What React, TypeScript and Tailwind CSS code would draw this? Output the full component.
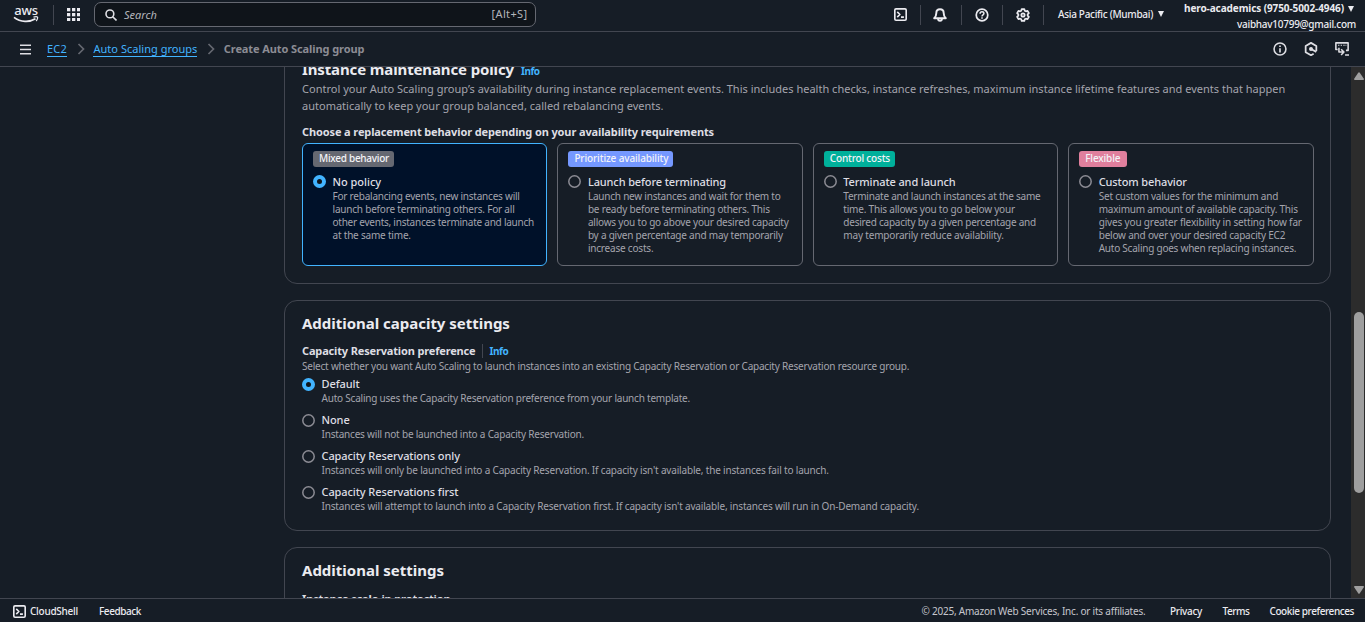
import React from 'react';
import type { ReactNode } from 'react';

const icon = { viewBox: '0 0 16 16', fill: 'none', stroke: 'currentColor', strokeWidth: 2.2, strokeLinejoin: 'round' as const };

function ShellIcon() {
  return (
    <svg {...icon} strokeWidth={2} className="size-[13px] shrink-0">
      <rect x="1" y="1" width="14" height="14" rx="1.5" />
      <path d="M4 4.8 7.2 8 4 11.2M8.6 11.2h3.6" />
    </svg>
  );
}

function BellIcon() {
  return (
    <svg {...icon} className="-ml-px mr-px size-[14px]">
      <path d="M8 1.400c-2.700 0-4.200 1.900-4.200 4.200 0 3.400-.9 4.500-2.400 6.100h13.200c-1.500-1.600-2.400-2.700-2.400-6.100C12.200 3.300 10.700 1.400 8 1.400Z" />
      <path d="M5.800 12.200c0 1.400.9 2.400 2.200 2.400s2.200-1 2.200-2.400" />
    </svg>
  );
}

function HelpIcon() {
  return (
    <svg {...icon} strokeWidth={2} className="size-[14px]">
      <circle cx="8" cy="8" r="6.600" />
      <path d="M5.800 6.500c0-1.300.9-2.200 2.200-2.200s2.200.8 2.200 2c0 1.600-2.200 1.500-2.200 3.400M8 10.700v1.600" strokeWidth={1.700} />
    </svg>
  );
}

function GearIcon() {
  return (
    <svg {...icon} strokeWidth={2} className="size-[14px]">
      <path d="M6.500 1.200h3l.5 1.900 1.300.7 1.900-.5 1.500 2.600-1.400 1.400v1.400l1.400 1.400-1.500 2.600-1.900-.5-1.300.7-.5 1.900h-3L6 12.900l-1.300-.7-1.900.5-1.500-2.600 1.400-1.400V7.300L1.300 5.900l1.500-2.600 1.900.5L6 3.100Z" />
      <circle cx="8" cy="8" r="1.900" />
    </svg>
  );
}

function InfoIcon() {
  return (
    <svg {...icon} strokeWidth={1.800} className="size-[14px]">
      <circle cx="8" cy="8" r="6.800" />
      <path d="M8 4.100v1.700M8 7v5" strokeWidth={1.900} />
    </svg>
  );
}

function HexIcon() {
  return (
    <svg {...icon} strokeWidth={2} className="size-[14px]">
      <path d="M11 13.500 8 15.100 1.900 11.600V4.500L8 1l6.100 3.500v5.800" />
      <path d="M14.100 11.200 8.500 8.300" strokeWidth={2.200} />
      <circle cx="8" cy="8" r="1.300" fill="currentColor" />
    </svg>
  );
}

function ScreenIcon() {
  return (
    <svg {...icon} strokeWidth={1.800} className="size-[14px]">
      <path d="M3 8.600H1V1h14v8.600h-2.500" />
      <path d="M3.500 3.700h1.500M6.500 3.700H8M9.500 3.700H11M12 3.700h1" strokeWidth={1.300} />
      <path d="M4.500 6.500v5h5M7 8.200l3.200 3.300L7 14.800M11.500 14.800H16" />
    </svg>
  );
}

function AwsLogo() {
  return (
    <div className="flex w-[26px] flex-col items-center pb-[2px] text-[#ebebf0]">
      <span className="h-[11px] text-[13px] leading-[10px] font-medium tracking-[-0.2px]">aws</span>
      <svg viewBox="0 0 26 7" className="h-[7px] w-[26px]" fill="none" stroke="currentColor">
        <path d="M1 1.300c6.500 5 15.500 5.200 21.500 1.500" strokeWidth="1.700" />
        <path d="M20.500 1.200c2-.6 3.600-.5 4 0 .3.600-.2 2.300-1.300 3.800" strokeWidth="1.300" />
      </svg>
    </div>
  );
}

function Radio({ checked = false, className = '' }: { checked?: boolean; className?: string }) {
  return checked ? (
    <span className={`size-[13px] shrink-0 rounded-full border-4 border-[#42b4ff] bg-[#0f141a] ${className}`} />
  ) : (
    <svg viewBox="0 0 13 13" className={`size-[13px] shrink-0 ${className}`} fill="none" stroke="#8c8c94" strokeWidth="1.500">
      <circle cx="6.500" cy="6.500" r="5.700" />
    </svg>
  );
}

type Line = [text: string, tracking: string];

const behaviors: {
  badge: string;
  badgeClass: string;
  title: string;
  titleClass: string;
  lines: Line[];
  selected?: boolean;
}[] = [
  {
    badge: 'Mixed behavior',
    badgeClass: 'w-[81px] bg-[#656871] tracking-[-0.28px]',
    title: 'No policy',
    titleClass: 'tracking-[-0.03px]',
    selected: true,
    lines: [
      ['For rebalancing events, new instances will', 'tracking-[-0.22px]'],
      ['launch before terminating others. For all', 'tracking-[-0.2px]'],
      ['other events, instances terminate and launch', 'tracking-[-0.24px]'],
      ['at the same time.', 'tracking-[-0.2px]'],
    ],
  },
  {
    badge: 'Prioritize availability',
    badgeClass: 'w-[105px] bg-[#7598ff] tracking-[-0.13px]',
    title: 'Launch before terminating',
    titleClass: 'tracking-[-0.12px]',
    lines: [
      ['Launch new instances and wait for them to', 'tracking-[-0.22px]'],
      ['be ready before terminating others. This', 'tracking-[-0.2px]'],
      ['allows you to go above your desired capacity', 'tracking-[-0.2px]'],
      ['by a given percentage and may temporarily', 'tracking-[-0.22px]'],
      ['increase costs.', 'tracking-[-0.2px]'],
    ],
  },
  {
    badge: 'Control costs',
    badgeClass: 'w-[71px] bg-[#00b09b] tracking-[-0.18px]',
    title: 'Terminate and launch',
    titleClass: 'tracking-[-0.12px]',
    lines: [
      ['Terminate and launch instances at the same', 'tracking-[-0.23px]'],
      ['time. This allows you to go below your', 'tracking-[-0.2px]'],
      ['desired capacity by a given percentage and', 'tracking-[-0.23px]'],
      ['may temporarily reduce availability.', 'tracking-[-0.18px]'],
    ],
  },
  {
    badge: 'Flexible',
    badgeClass: 'w-[48px] bg-[#e07f9d] tracking-[-0.15px]',
    title: 'Custom behavior',
    titleClass: 'tracking-[-0.12px]',
    lines: [
      ['Set custom values for the minimum and', 'tracking-[-0.22px]'],
      ['maximum amount of available capacity. This', 'tracking-[-0.22px]'],
      ['gives you greater flexibility in setting how far', 'tracking-[-0.16px]'],
      ['below and over your desired capacity EC2', 'tracking-[-0.2px]'],
      ['Auto Scaling goes when replacing instances.', 'tracking-[-0.235px]'],
    ],
  },
];

const reservations = [
  { title: 'Default', text: 'Auto Scaling uses the Capacity Reservation preference from your launch template.', tracking: 'tracking-[-0.211px]', checked: true },
  { title: 'None', text: 'Instances will not be launched into a Capacity Reservation.', tracking: 'tracking-[-0.2px]' },
  { title: 'Capacity Reservations only', text: "Instances will only be launched into a Capacity Reservation. If capacity isn't available, the instances fail to launch.", tracking: 'tracking-[-0.175px]' },
  { title: 'Capacity Reservations first', text: "Instances will attempt to launch into a Capacity Reservation first. If capacity isn't available, instances will run in On-Demand capacity.", tracking: 'tracking-[-0.17px]' },
];

function Panel({ className, children }: { className: string; children: ReactNode }) {
  return <section className={`shrink-0 rounded-[13px] border border-[#424650] pr-[16.4px] pl-[17px] ${className}`}>{children}</section>;
}

function Divider() {
  return <span className="h-5 w-px bg-[#424650]" />;
}

function Chevron() {
  return (
    <svg viewBox="0 0 8 12" className="h-3 w-2" fill="none" stroke="#656871" strokeWidth="1.700">
      <path d="m1.500 1 5 5-5 5" />
    </svg>
  );
}

function Caret({ className = '' }: { className?: string }) {
  return (
    <svg viewBox="0 0 6 6" className={`size-[6px] ${className}`} fill="currentColor">
      <path d="M0 0h6L3 6Z" />
    </svg>
  );
}

export default function App() {
  return (
    <div className="flex h-[622px] w-[1365px] flex-col overflow-hidden bg-[#161d26] font-['Noto_Sans',sans-serif] whitespace-nowrap text-[#dedee3]">
      <header className="flex h-8 shrink-0 items-start border-b border-[#424650]">
        <div className="flex h-[29px] items-center pl-[13px]">
          <AwsLogo />
          <span className="ml-[14px] h-5 w-px bg-[#424650]" />
          <svg viewBox="0 0 13 13" className="ml-[13px] size-[13px]" fill="#ebebf0">
            {[0, 5, 10].flatMap((y) => [0, 5, 10].map((x) => <rect key={`${x}-${y}`} x={x} y={y} width="3.300" height="3.300" />))}
          </svg>
          <div className="ml-[14px] flex h-[25px] w-[442px] items-center rounded-[7px] border border-[#656871] bg-[#0f141a] pt-px pr-[7.5px] pl-[10px] text-[11px]">
            <svg viewBox="0 0 12 12" className="mb-px size-3" fill="none" stroke="#dedee3" strokeWidth="1.600">
              <circle cx="4.900" cy="4.900" r="3.900" />
              <path d="m7.700 7.700 3.800 3.800" />
            </svg>
            <span className="ml-[7px] text-[#b4b4bb] italic">Search</span>
            <span className="mb-px ml-auto tracking-[0.37px] text-[#b4b4bb]">[Alt+S]</span>
          </div>
        </div>
        <div className="ml-auto flex h-[29px] items-center gap-[13px] text-[#ebebf0]">
          <ShellIcon />
          <Divider />
          <BellIcon />
          <Divider />
          <HelpIcon />
          <Divider />
          <GearIcon />
          <Divider />
        </div>
        <div className="ml-[14px] flex h-[28px] items-center gap-[5px] text-[10px] font-medium text-[#ebebf0]">
          <span className="tracking-[-0.305px]">Asia Pacific (Mumbai)</span>
          <Caret />
        </div>
        <div className="mr-[9px] ml-[20px] flex flex-col items-end text-[10px] leading-4 text-[#ebebf0]">
          <span className="flex items-center gap-[4px] font-bold tracking-[-0.095px]">
            hero-academics (9750-5002-4946)
            <Caret className="mt-[2px] mr-[2px]" />
          </span>
          <span className="font-medium tracking-[-0.26px]">vaibhav10799@gmail.com</span>
        </div>
      </header>

      <nav className="flex h-[35px] shrink-0 items-center border-b border-[#424650] pr-[16.5px] pl-[20px] text-[11px]">
        <svg viewBox="0 0 11 11" className="size-[11px]" stroke="#dedee3" strokeWidth="1.500"><path d="M0 1.200h11M0 5.500h11M0 9.800h11" /></svg>
        <a className="ml-4 border-b border-[#42b4ff] leading-[14px] tracking-[0.2px] text-[#42b4ff]">EC2</a>
        <span className="ml-[10.5px]"><Chevron /></span>
        <a className="ml-[8px] border-b border-[#42b4ff] leading-[14px] tracking-[0.02px] text-[#42b4ff]">Auto Scaling groups</a>
        <span className="ml-[9.5px]"><Chevron /></span>
        <span className="ml-[9px] font-bold tracking-[-0.095px] text-[#8c8c94]">Create Auto Scaling group</span>
        <div className="ml-auto flex items-center gap-[17px] pb-px text-[#dedee3]">
          <InfoIcon />
          <HexIcon />
          <ScreenIcon />
        </div>
      </nav>

      <div className="flex h-[531px] shrink-0">
        <main className="flex flex-1 flex-col gap-4 overflow-hidden pr-[20px] pl-[284px]">
          <Panel className="-mt-[25px] h-[242px] pt-4">
            <div className="flex h-5 items-center">
              <h2 className="text-[15px] leading-5 font-bold tracking-[-0.128px] text-[#ebebf0]">Instance maintenance policy</h2>
              <a className="ml-[7px] pt-[3px] text-[10px] leading-4 font-bold tracking-[-0.5px] text-[#42b4ff]">Info</a>
            </div>
            <p className="mt-px text-[11px] leading-[17px] tracking-[0.01px] text-[#a4a4ad]">
              Control your Auto Scaling group’s availability during instance replacement events. This includes health checks, instance refreshes, maximum instance lifetime features and events that happen
              <br />
              automatically to keep your group balanced, called rebalancing events.
            </p>
            <h3 className="mt-[10px] text-[11px] leading-4 font-bold tracking-[-0.118px]">Choose a replacement behavior depending on your availability requirements</h3>
            <div className="mt-[3px] grid h-[123px] grid-cols-4 gap-[10px]">
              {behaviors.map((b) => (
                <div
                  key={b.title}
                  className={b.selected ? 'rounded-[6px] border border-[#42b4ff] bg-[#001129] px-[10px] pt-[7px]' : 'rounded-[6px] border border-[#656871] px-[10px] pt-[7px]'}
                >
                  <div className={`h-4 rounded-[3px] pl-[6px] text-[10px] leading-[15px] font-medium text-[#f3f3f7] ${b.badgeClass}`}>{b.badge}</div>
                  <div className="mt-[7px] flex items-center gap-[6.5px]">
                    <Radio checked={b.selected} className="mb-px" />
                    <span className={`text-[11px] leading-4 font-medium ${b.titleClass}`}>{b.title}</span>
                  </div>
                  <div className="pl-[19.5px] text-[10px] leading-[13px] text-[#a4a4ad]">
                    {b.lines.map(([text, tracking]) => (
                      <div key={text} className={tracking}>{text}</div>
                    ))}
                  </div>
                </div>
              ))}
            </div>
          </Panel>

          <Panel className="h-[231px] pt-3">
            <h2 className="text-[15px] leading-5 font-bold tracking-[-0.02px] text-[#ebebf0]">Additional capacity settings</h2>
            <div className="mt-[10px] flex h-4 items-center">
              <h3 className="text-[11px] leading-4 font-bold tracking-[-0.157px]">Capacity Reservation preference</h3>
              <span className="ml-[6px] h-[14px] w-px bg-[#424650]" />
              <a className="ml-[7px] text-[10px] leading-4 font-bold tracking-[-0.45px] text-[#42b4ff]">Info</a>
            </div>
            <p className="text-[10px] leading-[14px] tracking-[-0.208px] text-[#a4a4ad]">
              Select whether you want Auto Scaling to launch instances into an existing Capacity Reservation or Capacity Reservation resource group.
            </p>
            <div className="mt-[3px] flex flex-col gap-[7px]">
              {reservations.map((r) => (
                <div key={r.title}>
                  <div className="flex items-center gap-[6.5px]">
                    <Radio checked={r.checked} className="mt-px" />
                    <span className="text-[11px] leading-4 font-medium tracking-[-0.09px]">{r.title}</span>
                  </div>
                  <div className={`pl-[19.5px] text-[10px] leading-[13px] text-[#a4a4ad] ${r.tracking}`}>{r.text}</div>
                </div>
              ))}
            </div>
          </Panel>

          <Panel className="h-[120px] pt-3">
            <h2 className="text-[15px] leading-5 font-bold text-[#ebebf0]">Additional settings</h2>
            <h3 className="mt-[11px] text-[11px] leading-4 font-bold tracking-[-0.15px]">Instance scale-in protection</h3>
          </Panel>
        </main>
        <div className="flex w-[14px] flex-col items-center bg-[#2c2c2c] pt-[5px] pb-[4px] pl-px">
          <svg viewBox="0 0 10 8" className="h-2 w-[10px] shrink-0" fill="#9f9f9f"><path d="M4.200.8q.8-1 1.600 0L10 7q0 1-1 1H1Q0 8 0 7Z" /></svg>
          <div className="mt-[232px] h-[181px] w-[10px] shrink-0 rounded-full bg-[#9f9f9f]" />
          <svg viewBox="0 0 10 8" className="mt-auto h-2 w-[10px] shrink-0" fill="#9f9f9f"><path d="M4.200 7.200q.8 1 1.600 0L10 1q0-1-1-1H1Q0 0 0 1Z" /></svg>
        </div>
      </div>

      <footer className="flex h-6 shrink-0 items-center border-t border-[#424650] pt-[2px] pr-[11px] pl-[13px] text-[10px] font-medium text-[#ebebf0]">
        <ShellIcon />
        <span className="ml-[4px] tracking-[-0.254px]">CloudShell</span>
        <span className="ml-[21px] tracking-[-0.42px]">Feedback</span>
        <span className="ml-auto font-normal tracking-[-0.22px] text-[#c6c6cd]">© 2025, Amazon Web Services, Inc. or its affiliates.</span>
        <span className="ml-[24.5px] tracking-[-0.316px]">Privacy</span>
        <span className="ml-[20.5px] tracking-[-0.444px]">Terms</span>
        <span className="ml-[20px] tracking-[-0.418px]">Cookie preferences</span>
      </footer>
    </div>
  );
}
